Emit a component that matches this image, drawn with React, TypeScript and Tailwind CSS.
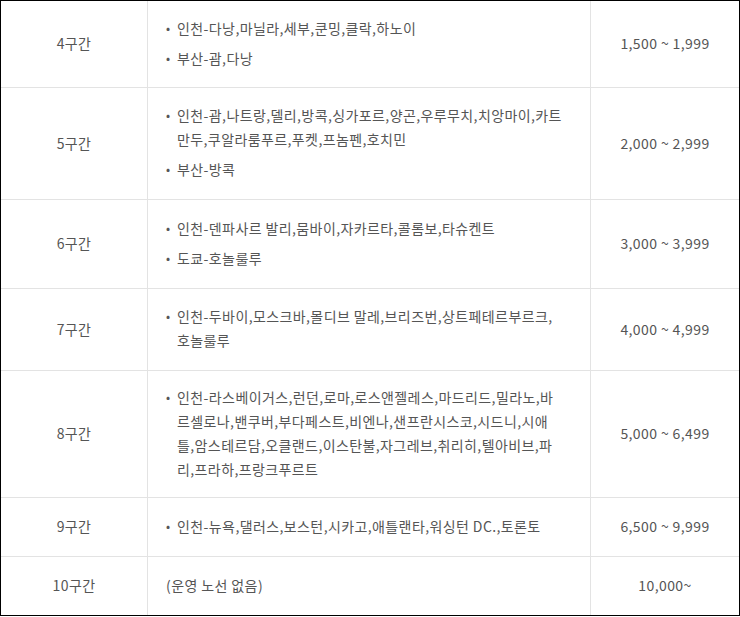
// each route entry is split into the lines shown in the table
const rows: { zone: string; routes: string[][] | null; note?: string; fare: string; h: string }[] = [
  { zone: "4구간", routes: [["인천-다낭,마닐라,세부,쿤밍,클락,하노이"], ["부산-괌,다낭"]], fare: "1,500 ~ 1,999", h: "h-[87px]" },
  {
    zone: "5구간",
    routes: [["인천-괌,나트랑,델리,방콕,싱가포르,양곤,우루무치,치앙마이,카트", "만두,쿠알라룸푸르,푸켓,프놈펜,호치민"], ["부산-방콕"]],
    fare: "2,000 ~ 2,999",
    h: "h-[112px]",
  },
  { zone: "6구간", routes: [["인천-덴파사르 발리,뭄바이,자카르타,콜롬보,타슈켄트"], ["도쿄-호놀룰루"]], fare: "3,000 ~ 3,999", h: "h-[89px]" },
  { zone: "7구간", routes: [["인천-두바이,모스크바,몰디브 말레,브리즈번,상트페테르부르크,", "호놀룰루"]], fare: "4,000 ~ 4,999", h: "h-[82px]" },
  {
    zone: "8구간",
    routes: [
      [
        "인천-라스베이거스,런던,로마,로스앤젤레스,마드리드,밀라노,바",
        "르셀로나,밴쿠버,부다페스트,비엔나,샌프란시스코,시드니,시애",
        "틀,암스테르담,오클랜드,이스탄불,자그레브,취리히,텔아비브,파",
        "리,프라하,프랑크푸르트",
      ],
    ],
    fare: "5,000 ~ 6,499",
    h: "h-[127px]",
  },
  { zone: "9구간", routes: [["인천-뉴욕,댈러스,보스턴,시카고,애틀랜타,워싱턴 DC.,토론토"]], fare: "6,500 ~ 9,999", h: "h-[59px]" },
  { zone: "10구간", routes: null, note: "(운영 노선 없음)", fare: "10,000~", h: "h-[58px]" },
];

export default function App() {
  return (
    <div
      className="h-[616px] w-[740px] border border-black bg-white text-[14px] leading-[24px] tracking-[0.4px] text-[#555]"
      style={{ fontFamily: '"Noto Sans CJK KR", "Noto Sans", sans-serif' }}
    >
      {rows.map((r, i) => (
        <div
          key={r.zone}
          className={`flex ${r.h} ${i < rows.length - 1 ? "border-b border-[#e3e3e3]" : ""}`}
        >
          <div className="flex w-[147px] shrink-0 items-center justify-center border-r border-[#e3e3e3] pb-[2px]">
            {r.zone}
          </div>
          <div className="flex w-[443px] shrink-0 items-center border-r border-[#e3e3e3] pb-[3px] pl-[18px] pr-[10px]">
            {r.routes ? (
              <ul className="flex flex-col gap-[6px]">
                {r.routes.map((lines) => (
                  <li key={lines[0]} className="flex">
                    <span className="w-[11px] shrink-0 text-[12px]">•</span>
                    <span className="flex flex-col whitespace-nowrap">
                      {lines.map((l) => (
                        <span key={l}>{l}</span>
                      ))}
                    </span>
                  </li>
                ))}
              </ul>
            ) : (
              <span>{r.note}</span>
            )}
          </div>
          <div className="flex flex-1 items-center justify-center pb-[2px]">{r.fare}</div>
        </div>
      ))}
    </div>
  );
}
